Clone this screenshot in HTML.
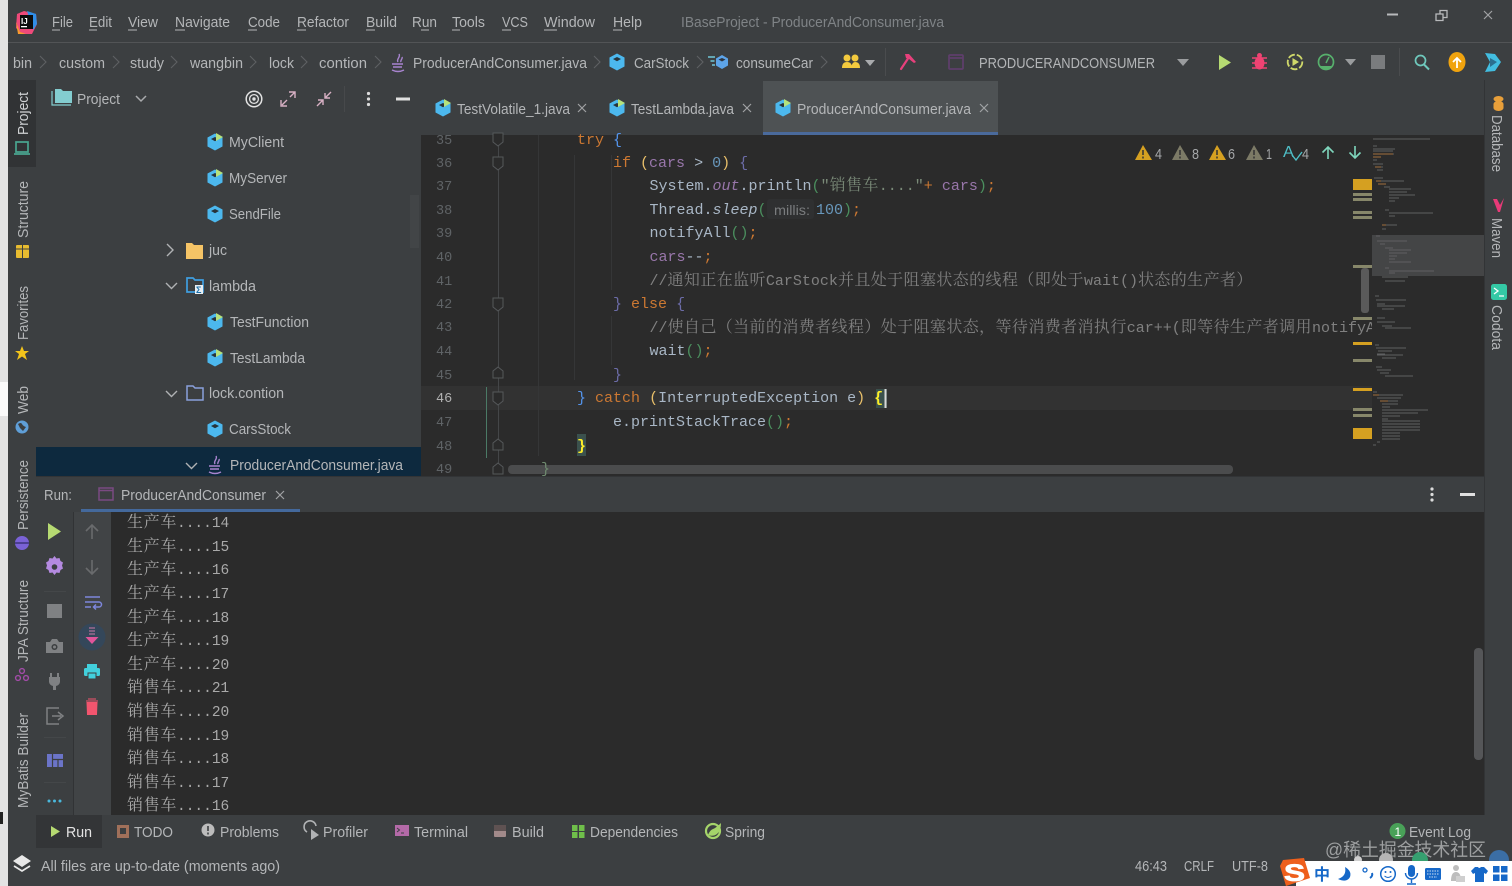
<!DOCTYPE html>
<html><head><meta charset="utf-8"><title>IBaseProject</title>
<style>
html,body{margin:0;padding:0;background:#3c3f41;width:1512px;height:886px;overflow:hidden}
svg{display:block}
text{font-family:"Liberation Sans","Noto Sans CJK SC",sans-serif;font-size:14.5px;fill:#b4b6b8;white-space:pre}
.m{font-family:"Liberation Mono","Noto Serif CJK SC",monospace;font-size:15px;fill:#a9b7c6}
.c{font-family:"Liberation Mono","Noto Serif CJK SC",monospace;font-size:14.5px;fill:#a9a9a9}
.j{font-family:"Noto Serif CJK SC",serif;font-size:16px;letter-spacing:.4px}
.cj{font-family:"Noto Serif CJK SC",serif;font-size:16px;letter-spacing:.67px}
.n{font-family:"Liberation Mono",monospace;font-size:13.5px;fill:#5f6366}
.o{fill:#cc7832}.p{fill:#9876aa}.g{fill:#808080}.b{fill:#5394ec}.y{fill:#e8bf6a}.t{fill:#4b8f5e}.v{fill:#6c6ca8}.k{fill:#6897bb}.s{fill:#7a8a78}.i{font-style:italic}
</style></head><body>
<svg width="1512" height="886" viewBox="0 0 1512 886" xmlns="http://www.w3.org/2000/svg">
<defs>
<g id="cube"><path d="M0-8.5 7.5-4.5V4.5L0 8.5-7.5 4.5V-4.5Z" fill="#4cb8ee"/><path d="M0-5 4-3 0-.8-4-3Z" fill="#27333a"/></g>
<g id="cuber"><use href="#cube"/><path d="M1-9 8-5 1-1Z" fill="#b5e27d"/></g>
<g id="java" fill="none" stroke="#a884cf" stroke-width="1.4"><path d="M1-9C3-6-2-4 0-1M4-6C5-4 2-3 3-1"/><path d="M-6 1H5M-5 4H4M-6 7Q0 10 6 7"/></g>
<g id="chev" fill="none" stroke="#5e6163" stroke-width="1.1"><path d="M0-6 6 0 0 6"/></g>
<g id="x" fill="none" stroke="#a0a2a4" stroke-width="1.2"><path d="M-4-4 4 4M4-4-4 4"/></g>
<g id="down" fill="none" stroke="#a9abad" stroke-width="1.5"><path d="M-5-3 0 2 5-3"/></g>
</defs>

<!-- base -->
<rect width="1512" height="886" fill="#3c3f41"/>
<rect width="8" height="886" fill="#e3e3e3"/>
<rect y="382" width="8" height="34" fill="#fafafa"/>
<rect y="812" width="3" height="12" fill="#222"/>
<rect x="8" y="42" width="1504" height="1" fill="#525456"/>

<!-- logo -->
<path d="M17 14 24 11 36 14 37 24 32 34 22 34 16 28Z" fill="#ef4a7a"/>
<path d="M27 11 36 14 37 24 33 30Z" fill="#2f8ee8"/>
<path d="M16 22 20 32 26 34 18 34Z" fill="#f79b2e"/>
<rect x="20" y="15" width="13" height="14" fill="#0d0d0d"/>
<text x="21" y="24" style="font-size:8px;font-weight:bold;fill:#fff">IJ</text>
<rect x="21" y="26" width="6" height="1.3" fill="#fff"/>

<!-- menu -->
<text x="52" y="27" textLength="21" lengthAdjust="spacingAndGlyphs">File</text>
<text x="89" y="27" textLength="23" lengthAdjust="spacingAndGlyphs">Edit</text>
<text x="128" y="27" textLength="30" lengthAdjust="spacingAndGlyphs">View</text>
<text x="175" y="27" textLength="55" lengthAdjust="spacingAndGlyphs">Navigate</text>
<text x="248" y="27" textLength="32" lengthAdjust="spacingAndGlyphs">Code</text>
<text x="297" y="27" textLength="52" lengthAdjust="spacingAndGlyphs">Refactor</text>
<text x="366" y="27" textLength="31" lengthAdjust="spacingAndGlyphs">Build</text>
<text x="412" y="27" textLength="25" lengthAdjust="spacingAndGlyphs">Run</text>
<text x="452" y="27" textLength="33" lengthAdjust="spacingAndGlyphs">Tools</text>
<text x="502" y="27" textLength="26" lengthAdjust="spacingAndGlyphs">VCS</text>
<text x="544" y="27" textLength="51" lengthAdjust="spacingAndGlyphs">Window</text>
<text x="613" y="27" textLength="29" lengthAdjust="spacingAndGlyphs">Help</text>
<path d="M52 30h8M89 30h8M128 30h9M175 30h10M248 30h9M297 30h9M366 30h9M421 30h8M452 30h8M502 30h9M544 30h13M613 30h9" stroke="#b4b6b8" fill="none"/>
<text x="681" y="27" textLength="263" lengthAdjust="spacingAndGlyphs" style="fill:#7f8386">IBaseProject - ProducerAndConsumer.java</text>
<path d="M1387 14.500h11" stroke="#b8babc" stroke-width="2"/>
<path d="M1436 14h7v6.500h-7ZM1440 14v-3.500h7v7h-4" fill="none" stroke="#b8babc" stroke-width="1.300"/>
<use href="#x" x="1488" y="15" style="stroke-width:1.500"/>

<!-- breadcrumbs -->
<g style="fill:#a9abad">
<text x="13" y="68" textLength="19" lengthAdjust="spacingAndGlyphs">bin</text>
<text x="59" y="68" textLength="46" lengthAdjust="spacingAndGlyphs">custom</text>
<text x="130" y="68" textLength="34" lengthAdjust="spacingAndGlyphs">study</text>
<text x="190" y="68" textLength="53" lengthAdjust="spacingAndGlyphs">wangbin</text>
<text x="269" y="68" textLength="25" lengthAdjust="spacingAndGlyphs">lock</text>
<text x="319" y="68" textLength="48" lengthAdjust="spacingAndGlyphs">contion</text>
<text x="413" y="68" textLength="174" lengthAdjust="spacingAndGlyphs">ProducerAndConsumer.java</text>
<text x="634" y="68" textLength="55" lengthAdjust="spacingAndGlyphs">CarStock</text>
<text x="736" y="68" textLength="77" lengthAdjust="spacingAndGlyphs">consumeCar</text>
<text x="979" y="68" textLength="176" lengthAdjust="spacingAndGlyphs">PRODUCERANDCONSUMER</text>
</g>
<use href="#chev" x="40" y="62"/><use href="#chev" x="113" y="62"/><use href="#chev" x="171" y="62"/><use href="#chev" x="250" y="62"/><use href="#chev" x="301" y="62"/><use href="#chev" x="375" y="62"/><use href="#chev" x="594" y="62"/><use href="#chev" x="697" y="62"/><use href="#chev" x="821" y="62"/>
<use href="#java" x="398" y="63"/>
<use href="#cube" x="617" y="62"/>
<g transform="translate(722,62)"><path d="M0-7 6-3.500V3.500L0 7-6 3.500V-3.500Z" fill="#5da4e8"/><path d="M0-4 3.500-2.500 0-.5-3.500-2.500Z" fill="#2d3540"/><path d="M-14-5h7M-11.500-1h4M-10 3h3" stroke="#70c7d8" stroke-width="1.500"/></g>
<!-- users -->
<g fill="#f3ca3e"><circle cx="847" cy="58" r="3.500"/><circle cx="855" cy="58" r="3.500"/><path d="M842 68q0-6 5-6t5 6ZM851 68q1-6 4-6 5 0 5 6Z"/></g>
<path d="M865 60h10l-5 6Z" fill="#a9abad"/>
<rect x="885" y="48" width="1" height="28" fill="#4a4c4e"/>
<!-- hammer -->
<path d="M901 69 909 57" stroke="#e8407c" stroke-width="2.200" stroke-linecap="round"/><path d="M905 54h4l7 8-2 1-5-4-3-1Z" fill="#e8407c"/>
<rect x="949" y="55" width="14" height="14" rx="1" fill="none" stroke="#5e3f6b" stroke-width="1.800"/><path d="M949 58h14" stroke="#5e3f6b" stroke-width="1.800"/>
<path d="M1177 59h12l-6 7Z" fill="#9a9c9e"/>
<path d="M1219 55 1231 62.500 1219 70Z" fill="#b6da72"/>
<g fill="#ef4373"><ellipse cx="1259.500" cy="63" rx="5" ry="6.500"/><circle cx="1259.500" cy="55.500" r="2.500"/><path d="M1252 58l15 0M1252 63h15M1252 68l15 0" stroke="#ef4373" stroke-width="1.500"/></g>
<circle cx="1295" cy="62" r="7.300" fill="none" stroke="#cfd86a" stroke-width="1.800" stroke-dasharray="7 2"/><path d="M1292.500 58 1299 62 1292.500 66Z" fill="#cfd86a"/>
<circle cx="1326" cy="62" r="7.500" fill="none" stroke="#57b06c" stroke-width="1.700"/><path d="M1320 66a7 7 0 0 0 12 0Z" fill="#57b06c"/><path d="M1326 63 1329 57" stroke="#57b06c" stroke-width="1.500"/>
<path d="M1345 59h11l-5.500 6.500Z" fill="#9a9c9e"/>
<rect x="1371" y="55" width="14" height="14" fill="#7a7c7e"/>
<rect x="1399" y="48" width="1" height="28" fill="#4a4c4e"/>
<circle cx="1420.500" cy="60.500" r="5" fill="none" stroke="#6fc9bd" stroke-width="1.700"/><path d="M1424 64.500 1429 69.500" stroke="#6fc9bd" stroke-width="2"/>
<ellipse cx="1457" cy="62" rx="8.500" ry="10" fill="#f0a30e"/><path d="M1457 68v-10M1453 62l4-4 4 4" stroke="#fff" stroke-width="1.800" fill="none"/>
<path d="M1485 53 1495 54 1501 62 1495 71 1485 72 1490 62Z" fill="#42bde0"/><path d="M1490 58 1497 62 1490 67Z" fill="#2b6f8f"/>

<!-- tabs -->
<rect x="421" y="81" width="1063" height="54" fill="#3c3f41"/>
<rect x="763" y="81" width="235" height="51" fill="#4e5254"/>
<rect x="763" y="132" width="235" height="3" fill="#4a6a9c"/>
<use href="#cuber" x="443" y="108"/><use href="#cuber" x="617" y="108"/><use href="#cuber" x="783" y="108"/>
<text x="457" y="114" textLength="113" lengthAdjust="spacingAndGlyphs">TestVolatile_1.java</text>
<text x="631" y="114" textLength="103" lengthAdjust="spacingAndGlyphs">TestLambda.java</text>
<text x="797" y="114" textLength="174" lengthAdjust="spacingAndGlyphs">ProducerAndConsumer.java</text>
<use href="#x" x="582" y="108"/><use href="#x" x="747" y="108"/><use href="#x" x="984" y="108"/>

<!-- left stripe -->
<rect x="8" y="80" width="28" height="735" fill="#3c3f41"/>
<rect x="8" y="80" width="28" height="87" fill="#313335"/>
<rect x="8" y="847" width="2" height="39" fill="#3c3f41"/>
<g style="font-size:13.500px">
<text transform="translate(28,135) rotate(-90)" textLength="43" lengthAdjust="spacingAndGlyphs" style="fill:#d0d2d4">Project</text>
<text transform="translate(28,238) rotate(-90)" textLength="57" lengthAdjust="spacingAndGlyphs">Structure</text>
<text transform="translate(28,340) rotate(-90)" textLength="54" lengthAdjust="spacingAndGlyphs">Favorites</text>
<text transform="translate(28,414) rotate(-90)" textLength="28" lengthAdjust="spacingAndGlyphs">Web</text>
<text transform="translate(28,530) rotate(-90)" textLength="70" lengthAdjust="spacingAndGlyphs">Persistence</text>
<text transform="translate(28,662) rotate(-90)" textLength="82" lengthAdjust="spacingAndGlyphs">JPA Structure</text>
<text transform="translate(28,808) rotate(-90)" textLength="95" lengthAdjust="spacingAndGlyphs">MyBatis Builder</text>
</g>
<path d="M16 142h12v10H16ZM14 154h16" fill="none" stroke="#49a58f" stroke-width="1.700"/>
<rect x="16" y="245" width="13" height="13" rx="1" fill="#e8bc30"/><path d="M22.500 245v13M16 249h13" stroke="#3c3f41"/>
<path d="M22 346 24 351 29 351 25 354 27 360 22 356.500 17 360 19 354 15 351 20 351Z" fill="#f3c41b"/>
<circle cx="22" cy="427" r="6.500" fill="#5f9fd8"/><path d="M18 424q3-2 4 0t4 3l-3 4-3-3Z" fill="#3c3f41"/>
<circle cx="22" cy="543" r="7" fill="#7a62d6"/><path d="M15 543h14" stroke="#4c3f93" stroke-width="2"/>
<g fill="none" stroke="#a24ca8" stroke-width="1.400"><circle cx="22" cy="671" r="2.400"/><circle cx="18" cy="678" r="2.400"/><circle cx="26" cy="678" r="2.400"/></g>

<!-- project panel -->
<rect x="36" y="80" width="385" height="397" fill="#3c3f41"/>
<path d="M55 89h6l2 2h9v12H55Z" fill="#83cdd0"/><path d="M52 91v14h19" fill="none" stroke="#83cdd0" stroke-width="1.200"/>
<text x="77" y="104" textLength="43" lengthAdjust="spacingAndGlyphs">Project</text>
<use href="#down" x="141" y="99"/>
<circle cx="254" cy="99" r="7.800" fill="none" stroke="#e2e2e2" stroke-width="1.500"/><circle cx="254" cy="99" r="4.400" fill="none" stroke="#e2e2e2" stroke-width="1.300"/><circle cx="254" cy="99" r="1.700" fill="#e2e2e2"/>
<g fill="none" stroke="#d8b0c4" stroke-width="1.400"><path d="M282 105 287 100M281 100v6h6M295 92 290 97M289 92h6v6"/><path d="M331 92 325 98M325 93v5h5M317 106 323 100M318 100h5v5"/></g>
<rect x="344" y="86" width="1" height="26" fill="#47494b"/>
<circle cx="368.500" cy="93.500" r="1.600" fill="#dcdcdc"/><circle cx="368.500" cy="99" r="1.600" fill="#dcdcdc"/><circle cx="368.500" cy="104.500" r="1.600" fill="#dcdcdc"/>
<rect x="396" y="97.500" width="14" height="3" fill="#e0e0e0"/>
<rect x="410" y="195" width="9" height="53" fill="#424547"/>
<rect x="36" y="447" width="385" height="30" fill="#0d293e"/>
<use href="#cuber" x="215" y="142"/><use href="#cuber" x="215" y="178"/><use href="#cube" x="215" y="214"/>
<use href="#cuber" x="215" y="322"/><use href="#cuber" x="215" y="358"/><use href="#cube" x="215" y="429"/>
<use href="#java" x="215" y="465"/>
<path d="M186 243h6l2 2h9v14h-17Z" fill="#f5c466"/>
<path d="M187 278h6l2 2h8v12h-16Z" fill="none" stroke="#3f9fe0" stroke-width="1.700"/><rect x="195" y="285" width="8" height="9" fill="#e8eef2"/><text x="196" y="293" style="font-size:9px;fill:#1c6fa8;font-weight:bold">Σ</text>
<path d="M187 386h6l2 2h8v12h-16Z" fill="none" stroke="#8aa0dc" stroke-width="1.500"/>
<g fill="none" stroke="#b0b2b4" stroke-width="1.400"><path d="M167 244 173 250 167 256M166 283l5.500 5.500 5.500-5.500M166 391l5.500 5.500 5.500-5.500M186 463l5.500 5.500 5.500-5.500"/></g>
<text x="229" y="147" textLength="55" lengthAdjust="spacingAndGlyphs">MyClient</text>
<text x="229" y="183" textLength="58" lengthAdjust="spacingAndGlyphs">MyServer</text>
<text x="229" y="219" textLength="52" lengthAdjust="spacingAndGlyphs">SendFile</text>
<text x="209" y="255" textLength="18" lengthAdjust="spacingAndGlyphs">juc</text>
<text x="209" y="291" textLength="47" lengthAdjust="spacingAndGlyphs">lambda</text>
<text x="230" y="327" textLength="79" lengthAdjust="spacingAndGlyphs">TestFunction</text>
<text x="230" y="363" textLength="75" lengthAdjust="spacingAndGlyphs">TestLambda</text>
<text x="209" y="398" textLength="75" lengthAdjust="spacingAndGlyphs">lock.contion</text>
<text x="229" y="434" textLength="62" lengthAdjust="spacingAndGlyphs">CarsStock</text>
<text x="230" y="470" textLength="173" lengthAdjust="spacingAndGlyphs">ProducerAndConsumer.java</text>

<!-- editor -->
<rect x="421" y="135" width="1063" height="342" fill="#2b2b2b"/>
<rect x="421" y="386" width="951" height="24" fill="#323232"/>
<path d="M498.500 135V470" stroke="#444648"/>
<path d="M538.500 135V456M574.500 155V380M611.500 155V290M611.500 316V365" stroke="#353637" fill="none"/>
<rect x="486" y="387" width="1" height="71" fill="#4b7a66"/>
<g fill="#2b2b2b" stroke="#55585a"><path d="M493 133h10v9l-5 4-5-4ZM493 157h10v9l-5 4-5-4ZM493 298h10v9l-5 4-5-4ZM493 392h10v9l-5 4-5-4ZM493 378h10v-7l-5-4-5 4ZM493 450h10v-7l-5-4-5 4ZM493 474h10v-7l-5-4-5 4Z"/></g>
<g class="nums">
<text class="n" x="436" y="144">35</text><text class="n" x="436" y="167">36</text><text class="n" x="436" y="190">37</text><text class="n" x="436" y="214">38</text><text class="n" x="436" y="237">39</text><text class="n" x="436" y="261">40</text><text class="n" x="436" y="285">41</text><text class="n" x="436" y="308">42</text><text class="n" x="436" y="331">43</text><text class="n" x="436" y="355">44</text><text class="n" x="436" y="379">45</text><text class="n" x="436" y="402" style="fill:#b0b0b0">46</text><text class="n" x="436" y="426">47</text><text class="n" x="436" y="450">48</text><text class="n" x="436" y="473">49</text>
</g>
<g xml:space="preserve">
<text class="m" x="577" y="144"><tspan class="o">try</tspan> <tspan class="b">{</tspan></text>
<text class="m" x="613" y="167"><tspan class="o">if</tspan> <tspan class="y">(</tspan><tspan class="p">cars</tspan> &gt; <tspan class="k">0</tspan><tspan class="y">)</tspan> <tspan class="v">{</tspan></text>
<text class="m" x="649.500" y="190">System.<tspan class="p i">out</tspan>.println<tspan class="t">(</tspan><tspan class="s">"</tspan><tspan class="j s">销售车</tspan><tspan class="s">...."</tspan><tspan class="o">+</tspan> <tspan class="p">cars</tspan><tspan class="t">)</tspan><tspan class="o">;</tspan></text>
<text class="m" x="649.500" y="214">Thread.<tspan class="i">sleep</tspan><tspan class="t">(</tspan></text>
<rect x="767" y="199" width="47" height="20" rx="3" fill="#2f3031"/>
<text x="774" y="215" textLength="36" lengthAdjust="spacingAndGlyphs" style="fill:#7a7c7e;font-size:14px">millis:</text>
<text class="m" x="816" y="214"><tspan class="k">100</tspan><tspan class="t">)</tspan><tspan class="o">;</tspan></text>
<text class="m" x="649.500" y="237">notifyAll<tspan class="t">()</tspan><tspan class="o">;</tspan></text>
<text class="m" x="649.500" y="261"><tspan class="p">cars</tspan>--<tspan class="o">;</tspan></text>
<text class="m g" x="649.500" y="285" style="fill:#808080">//<tspan class="j">通知正在监听</tspan>CarStock<tspan class="j">并且处于阻塞状态的线程（即处于</tspan>wait()<tspan class="j">状态的生产者）</tspan></text>
<text class="m" x="613" y="308"><tspan class="v">}</tspan> <tspan class="o">else</tspan> <tspan class="v">{</tspan></text>
<svg x="0" y="0" width="1372" height="477" overflow="hidden"><text class="m" x="649.500" y="332" style="fill:#808080">//<tspan class="j">使自己（当前的消费者线程）处于阻塞状态，等待消费者消执行</tspan>car++(<tspan class="j">即等待生产者调用</tspan>notifyAll</text></svg>
<text class="m" x="649.500" y="355">wait<tspan class="t">()</tspan><tspan class="o">;</tspan></text>
<text class="m" x="613" y="379"><tspan class="v">}</tspan></text>
<rect x="876" y="389" width="11" height="19" fill="#3b514d"/>
<text class="m" x="577" y="402"><tspan class="b">}</tspan> <tspan class="o">catch</tspan> <tspan class="y">(</tspan>InterruptedException e<tspan class="y">)</tspan> <tspan style="fill:#ffef28;font-weight:bold">{</tspan></text>
<rect x="884.500" y="389" width="2" height="19" fill="#d8d8d8"/>
<text class="m" x="613" y="426">e.printStackTrace<tspan class="t">()</tspan><tspan class="o">;</tspan></text>
<rect x="577" y="434" width="9" height="22" fill="#3b514d"/>
<text class="m" x="577" y="450" style="fill:#ffef28;font-weight:bold">}</text>
<rect x="508" y="465" width="725" height="9" rx="4" fill="#4b4c4d"/>
<text class="m" x="541" y="473" style="fill:#6f8a6f">}</text>
</g>

<!-- inspection widget -->
<g font-size="0">
<path d="M1143 145 1152 160H1135Z" fill="#d5a021"/><path d="M1180 145 1189 160H1172Z" fill="#7c7a66"/><path d="M1217 145 1226 160H1209Z" fill="#d5a021"/><path d="M1254 145 1263 160H1246Z" fill="#7c7a66"/>
<path d="M1143 150v5M1143 156.500v2M1180 150v5M1180 156.500v2M1217 150v5M1217 156.500v2M1254 150v5M1254 156.500v2" stroke="#333" stroke-width="1.500"/>
</g>
<text x="1155" y="159" textLength="7" lengthAdjust="spacingAndGlyphs" style="font-size:15px;fill:#a5a7a9">4</text>
<text x="1192" y="159" textLength="7" lengthAdjust="spacingAndGlyphs" style="font-size:15px;fill:#a5a7a9">8</text>
<text x="1228" y="159" textLength="7" lengthAdjust="spacingAndGlyphs" style="font-size:15px;fill:#a5a7a9">6</text>
<text x="1266" y="159" textLength="6" lengthAdjust="spacingAndGlyphs" style="font-size:15px;fill:#a5a7a9">1</text>
<text x="1283" y="157" textLength="11" lengthAdjust="spacingAndGlyphs" style="font-size:16px;fill:#4fc0c8">A</text>
<path d="M1292 155 1296 160 1302 152" fill="none" stroke="#4fc0c8" stroke-width="1.400"/>
<text x="1302" y="159" textLength="7" lengthAdjust="spacingAndGlyphs" style="font-size:15px;fill:#a5a7a9">4</text>
<path d="M1328 159V147M1322.500 152.500 1328 147 1333.500 152.500M1355 146V158M1349.500 152.500 1355 158 1360.500 152.500" fill="none" stroke="#7fd6bd" stroke-width="1.600"/>

<!-- error stripes + minimap -->
<rect x="1372" y="235" width="112" height="41" fill="#444546"/>
<rect x="1361" y="268" width="8" height="45" rx="3" fill="#5a5a5a"/>
<g fill="#d5a021"><rect x="1353" y="179" width="19" height="11"/><rect x="1353" y="342" width="19" height="3"/><rect x="1353" y="388" width="19" height="3"/><rect x="1353" y="428" width="19" height="11"/></g>
<g fill="#87876a"><rect x="1353" y="193" width="19" height="3"/><rect x="1353" y="198" width="19" height="3"/><rect x="1353" y="211" width="19" height="3"/><rect x="1353" y="216" width="19" height="3"/><rect x="1353" y="265" width="19" height="3"/><rect x="1353" y="317" width="19" height="3"/><rect x="1353" y="359" width="19" height="3"/><rect x="1353" y="408" width="19" height="3"/><rect x="1353" y="414" width="19" height="3"/></g>
<path d="M1373 139h57M1373 146h4M1373 149h22M1373 151h20M1373 154h21M1373 157h8M1373 160h4M1373 164h10M1375 167h8M1377 170h6M1374 178h9M1377 181h27M1380 184h5M1384 187h6M1389 189h22M1389 192h18M1389 195h26M1389 198h10M1389 201h6M1385 210h4M1389 213h44M1389 216h6M1382 225h15M1382 229h4M1376 236h4M1377 241h30M1380 244h5M1385 248h8M1389 250h22M1389 253h18M1389 256h8M1389 259h6M1389 262h22M1385 268h4M1389 271h45M1389 273h6M1382 277h26M1385 281h20M1375 296h4M1376 300h30M1377 304h8M1377 306h28M1382 309h12M1377 318h8M1377 322h18M1382 326h10M1385 328h26M1375 345h4M1376 348h30M1378 351h14M1377 354h8M1377 355h26M1382 358h14M1376 367h6M1377 370h14M1380 373h9M1385 376h28M1373 392h4M1373 395h30M1377 398h24M1380 401h18M1382 404h16M1382 407h8M1382 410h46M1382 413h36M1382 416h18M1382 419h6M1382 421h38M1382 424h38M1382 427h38M1382 430h38M1382 433h18M1382 436h18M1382 439h18M1377 442h3M1373 445h3" fill="none" stroke="#5f6062" stroke-width=".9"/>
<path d="M1373 154h20M1373 157h8M1375 167h6M1378 184h8M1376 181h5M1382 225h4M1373 395h6M1380 401h8" fill="none" stroke="#a06f3c" stroke-width=".9"/>

<!-- right stripe -->
<rect x="1484" y="80" width="28" height="767" fill="#3c3f41"/>
<rect x="1484" y="80" width="1" height="767" fill="#323436"/>
<g style="font-size:13.500px">
<text transform="translate(1492,115) rotate(90)" textLength="57" lengthAdjust="spacingAndGlyphs">Database</text>
<text transform="translate(1492,218) rotate(90)" textLength="40" lengthAdjust="spacingAndGlyphs">Maven</text>
<text transform="translate(1492,305) rotate(90)" textLength="45" lengthAdjust="spacingAndGlyphs">Codota</text>
</g>
<ellipse cx="1498.500" cy="99" rx="5" ry="3" fill="#e89f3a"/><ellipse cx="1498.500" cy="104" rx="5" ry="3" fill="#e89f3a"/><path d="M1493.500 108a5 3 0 0 0 10 0v-4h-10Z" fill="#e89f3a"/>
<path d="M1493 199 1497 199 1500 205 1504 198 1500 212 1498 212Z" fill="#e83a78"/>
<rect x="1491" y="284" width="16" height="16" rx="2.500" fill="#34c9a5"/><path d="M1494 288l4 3-4 3M1499 296h5" fill="none" stroke="#fff" stroke-width="1.300"/>

<!-- run panel -->
<rect x="36" y="477" width="1448" height="35" fill="#3c3f41"/>
<rect x="36" y="476" width="1448" height="1" fill="#323436"/>
<text x="44" y="500" textLength="28" lengthAdjust="spacingAndGlyphs">Run:</text>
<rect x="99" y="488" width="14" height="12" fill="none" stroke="#7a4a82" stroke-width="1.500"/><path d="M99 490.500h14" stroke="#7a4a82" stroke-width="1.500"/>
<text x="121" y="500" textLength="145" lengthAdjust="spacingAndGlyphs">ProducerAndConsumer</text>
<use href="#x" x="280" y="495"/>
<rect x="81" y="509" width="219" height="3" fill="#44699c"/>
<circle cx="1432" cy="489" r="1.600" fill="#dcdcdc"/><circle cx="1432" cy="494.500" r="1.600" fill="#dcdcdc"/><circle cx="1432" cy="500" r="1.600" fill="#dcdcdc"/>
<rect x="1460" y="493" width="15" height="3" fill="#e0e0e0"/>

<rect x="36" y="512" width="37" height="303" fill="#3c3f41"/>
<rect x="73" y="512" width="38" height="303" fill="#414446"/>
<rect x="73" y="512" width="1" height="303" fill="#313335"/>
<rect x="111" y="512" width="1373" height="303" fill="#2b2b2b"/>
<path d="M48 523 61 531.500 48 540Z" fill="#b6da72"/>
<path d="M54.500 558l2 2.500 3-.5 1 3 2.500 1.500-1 3 1 3-2.500 1.500-1 3-3-.5-2 2.500-2-2.500-3 .5-1-3-2.500-1.500 1-3-1-3 2.500-1.500 1-3 3 .5Z" transform="translate(0,-2) scale(1)" fill="#b48ae0"/><circle cx="54.500" cy="567" r="2.800" fill="#3c3f41"/>
<rect x="44" y="591" width="22" height="1" fill="#4a4c4e" opacity=".6"/>
<rect x="47" y="604" width="15" height="14" fill="#7f8183"/>
<path d="M46 642h4l2-3h5l2 3h4v11H46Z" fill="#7f8183"/><circle cx="54.500" cy="647" r="3" fill="#3c3f41"/><circle cx="54.500" cy="647" r="1.500" fill="#7f8183"/>
<path d="M51 673v4M58 673v4" stroke="#7f8183" stroke-width="2"/><path d="M49 677h11v5a5 5 0 0 1-4 4v4h-3v-4a5 5 0 0 1-4-4Z" fill="#7f8183"/>
<path d="M59 708H47v16h12M52 716h9M58 712l5 4-5 4" fill="none" stroke="#7f8183" stroke-width="1.500"/>
<rect x="44" y="737" width="22" height="1" fill="#4a4c4e" opacity=".6"/>
<rect x="47" y="754" width="16" height="13" fill="#6b74c8"/><path d="M52.500 754v13M52.500 759.500H63M58 759.500V767" stroke="#3c3f41" stroke-width="1.200"/>
<rect x="44" y="782" width="22" height="1" fill="#4a4c4e" opacity=".6"/>
<circle cx="49" cy="801" r="1.500" fill="#4ab8dc"/><circle cx="54.500" cy="801" r="1.500" fill="#4ab8dc"/><circle cx="60" cy="801" r="1.500" fill="#4ab8dc"/>
<path d="M92 539V525M86 531 92 525 98 531M92 560V574M86 568 92 574 98 568" fill="none" stroke="#696b6d" stroke-width="1.600"/>
<path d="M85 597h15M85 602h14a2.500 2.500 0 0 1 0 5h-5M96 604.500 93.500 607 96 609.500M85 607h6" fill="none" stroke="#7d86dc" stroke-width="1.500"/>
<circle cx="92" cy="637" r="13.500" fill="#34475a"/><path d="M89 628h6M89 631h6M89 634h6" stroke="#b0709a" stroke-width="1.300"/><path d="M85.500 637h13l-6.500 7Z" fill="#e0559a"/>
<rect x="87" y="664" width="10" height="4" fill="#42d0dc"/><rect x="84" y="668" width="16" height="8" rx="1.500" fill="#42d0dc"/><rect x="88" y="673" width="8" height="6" fill="#42d0dc" stroke="#3c3f41"/>
<path d="M88 699h8M86 701h12M87 702.500h10l-.5 12h-9Z" fill="#f2556e" stroke="#f2556e"/>

<g xml:space="preserve">
<text class="c" x="127" y="527"><tspan class="cj">生产车</tspan>....14</text>
<text class="c" x="127" y="551"><tspan class="cj">生产车</tspan>....15</text>
<text class="c" x="127" y="574"><tspan class="cj">生产车</tspan>....16</text>
<text class="c" x="127" y="598"><tspan class="cj">生产车</tspan>....17</text>
<text class="c" x="127" y="622"><tspan class="cj">生产车</tspan>....18</text>
<text class="c" x="127" y="645"><tspan class="cj">生产车</tspan>....19</text>
<text class="c" x="127" y="669"><tspan class="cj">生产车</tspan>....20</text>
<text class="c" x="127" y="692"><tspan class="cj">销售车</tspan>....21</text>
<text class="c" x="127" y="716"><tspan class="cj">销售车</tspan>....20</text>
<text class="c" x="127" y="740"><tspan class="cj">销售车</tspan>....19</text>
<text class="c" x="127" y="763"><tspan class="cj">销售车</tspan>....18</text>
<text class="c" x="127" y="787"><tspan class="cj">销售车</tspan>....17</text>
<text class="c" x="127" y="810"><tspan class="cj">销售车</tspan>....16</text>
</g>
<rect x="1474" y="648" width="9" height="112" rx="4" fill="#555658"/>

<!-- bottom tool bar -->
<rect x="36" y="815" width="1476" height="71" fill="#3c3f41"/>
<rect x="36" y="815" width="66" height="33" fill="#333537"/>
<path d="M51 826 60 831.500 51 837Z" fill="#b6da72"/>
<text x="66" y="837" textLength="26" lengthAdjust="spacingAndGlyphs" style="fill:#e4e4e4">Run</text>
<rect x="117" y="825" width="12" height="13" fill="#a0705a"/><rect x="120" y="828" width="6" height="6" fill="#3c3f41"/>
<text x="134" y="837" textLength="39" lengthAdjust="spacingAndGlyphs">TODO</text>
<circle cx="208" cy="830" r="6.500" fill="#bcbcbc"/><path d="M208 826v5M208 832.500v2" stroke="#3c3f41" stroke-width="1.600"/>
<text x="220" y="837" textLength="59" lengthAdjust="spacingAndGlyphs">Problems</text>
<path d="M316 826a6 6 0 1 0-9 6" fill="none" stroke="#b0b2b4" stroke-width="1.600"/><path d="M311 829 319 835 311 840Z" fill="#b0b2b4"/>
<text x="323" y="837" textLength="45" lengthAdjust="spacingAndGlyphs">Profiler</text>
<rect x="395" y="825" width="14" height="11" fill="#b46aa8"/><path d="M397 828l2.500 2-2.500 2M401 833h3" stroke="#3c3f41" fill="none"/>
<text x="414" y="837" textLength="54" lengthAdjust="spacingAndGlyphs">Terminal</text>
<rect x="494" y="825" width="12" height="12" rx="1" fill="#a28a8a"/><rect x="494" y="825" width="12" height="6" fill="#5f5252"/>
<text x="512" y="837" textLength="32" lengthAdjust="spacingAndGlyphs">Build</text>
<rect x="572" y="825" width="5.500" height="6" fill="#6fbf4a"/><rect x="579" y="825" width="5.500" height="6" fill="#6fbf4a"/><rect x="572" y="832" width="5.500" height="6" fill="#6fbf4a"/><rect x="579" y="832" width="5.500" height="6" fill="#6fbf4a"/>
<text x="590" y="837" textLength="88" lengthAdjust="spacingAndGlyphs">Dependencies</text>
<circle cx="713" cy="831" r="7" fill="none" stroke="#a5d46a" stroke-width="2.200"/><path d="M721 823q0 8-4 11t-9 1q2-5 5-6t8-6Z" fill="#a5d46a"/>
<text x="725" y="837" textLength="40" lengthAdjust="spacingAndGlyphs">Spring</text>

<!-- status -->
<path d="M22 855 31 861 22 867 13 861Z" fill="#e8e8e8"/><path d="M14 866 22 871 30 866" fill="none" stroke="#e8e8e8" stroke-width="1.700"/>
<text x="41" y="871" textLength="239" lengthAdjust="spacingAndGlyphs">All files are up-to-date (moments ago)</text>
<text x="1135" y="871" textLength="32" lengthAdjust="spacingAndGlyphs">46:43</text>
<text x="1184" y="871" textLength="30" lengthAdjust="spacingAndGlyphs">CRLF</text>
<text x="1232" y="871" textLength="36" lengthAdjust="spacingAndGlyphs">UTF-8</text>
<circle cx="1397.500" cy="831" r="8" fill="#49a158"/><text x="1394.500" y="836" style="font-size:12px;fill:#fff">1</text>
<text x="1409" y="837" textLength="62" lengthAdjust="spacingAndGlyphs">Event Log</text>
<text x="1325" y="856" textLength="161" lengthAdjust="spacingAndGlyphs" style="font-size:18px;fill:#9d9fa0">@稀土掘金技术社区</text>

<!-- IME bar -->
<circle cx="1358" cy="860" r="4" fill="#d0d0d0"/><circle cx="1386" cy="860" r="7" fill="#b5b5b5"/><circle cx="1420" cy="860" r="8" fill="#36a070"/><circle cx="1499" cy="860" r="10" fill="#3b6ea5"/>
<rect x="1296" y="861" width="216" height="25" fill="#fff"/>
<path d="M1283 860 1304 858 1310 878 1286 886 1280 866Z" fill="#ee5f1c"/>
<text x="1284" y="881" textLength="21" lengthAdjust="spacingAndGlyphs" style="font-size:24px;font-weight:bold;fill:#fff;stroke:#fff;stroke-width:.8">S</text>
<text x="1314" y="880" style="font-size:16px;font-weight:bold;fill:#1668c8;font-family:'Noto Sans CJK SC',sans-serif">中</text>
<path d="M1345 867q2 9-7 12 9 4 12-2 2-6-5-10Z" fill="#1668c8"/>
<circle cx="1365" cy="870" r="2" fill="none" stroke="#1668c8" stroke-width="1.300"/><path d="M1372 873q1 3-2 5" fill="none" stroke="#1668c8" stroke-width="2"/>
<circle cx="1388" cy="874" r="7.300" fill="none" stroke="#1668c8" stroke-width="1.500"/><circle cx="1385.500" cy="872" r="1" fill="#1668c8"/><circle cx="1390.500" cy="872" r="1" fill="#1668c8"/><path d="M1384.500 876q3.500 3 7 0" fill="none" stroke="#1668c8"/>
<rect x="1408" y="865" width="7" height="12" rx="3.500" fill="#1668c8"/><path d="M1405.500 873a6 6 0 0 0 12 0M1411.500 879v4M1407 884h9" fill="none" stroke="#1668c8" stroke-width="1.400"/>
<rect x="1425" y="868" width="16" height="12" rx="1.500" fill="#1668c8"/><path d="M1427 871h12M1427 874h12M1429 877h8" stroke="#cfe0f5" stroke-dasharray="1.500 1"/>
<circle cx="1456" cy="868" r="3" fill="#bdbdbd"/><path d="M1451 881q0-9 5-9t5 9Z" fill="#bdbdbd"/><rect x="1456" y="876" width="9" height="6" fill="#cfcfcf"/>
<path d="M1475 867h3q1 2 3 0h3l4 4-2 3-2-1v9h-9v-9l-2 1-2-3Z" fill="#1668c8"/>
<rect x="1493" y="866" width="6.500" height="6.500" fill="#1668c8"/><rect x="1501" y="866" width="6.500" height="6.500" fill="#1668c8"/><rect x="1493" y="874.500" width="6.500" height="6.500" fill="#1668c8"/><rect x="1501" y="874.500" width="6.500" height="6.500" fill="#1668c8"/>
</svg>
</body></html>
